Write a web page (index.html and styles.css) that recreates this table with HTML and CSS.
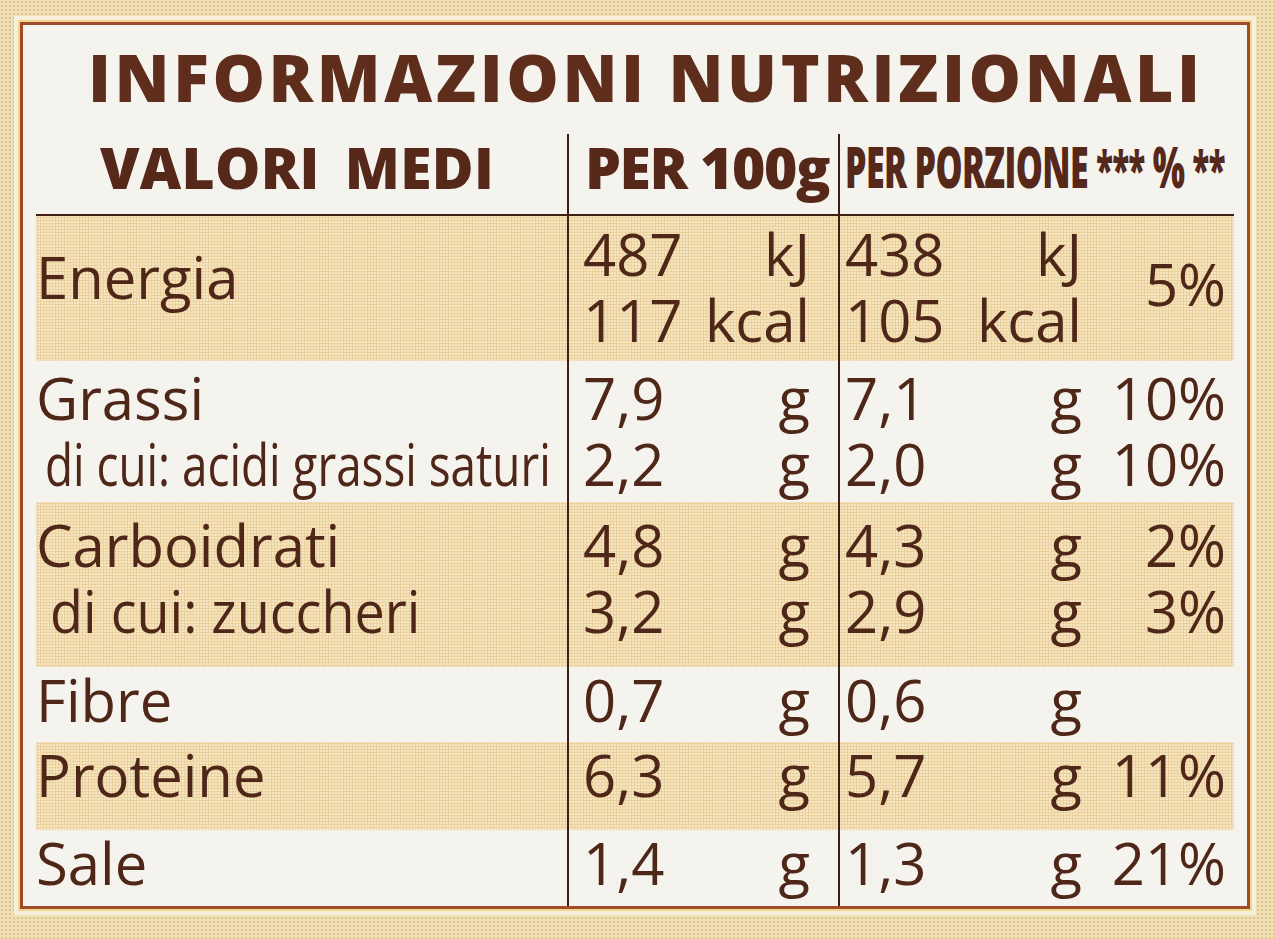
FILE: index.html
```html
<!DOCTYPE html>
<html lang="it">
<head>
<meta charset="utf-8">
<title>Informazioni nutrizionali</title>
<link rel="stylesheet" href="styles.css">
</head>
<body>
<div class="label">
  <h1 class="title">INFORMAZIONI NUTRIZIONALI</h1>
  <div class="table">
    <div class="row head">
      <div class="c1"><span class="valori">VALORI MEDI</span></div>
      <div class="c2"><span class="per100">PER 100g</span></div>
      <div class="c3"><span class="cond">PER PORZIONE <span class="ast">***</span> % <span class="ast">**</span></span></div>
    </div>

    <div class="row band r-energy">
      <div class="c1 energia">Energia</div>
      <div class="c2">
        <div class="line"><span>487</span><span>kJ</span></div>
        <div class="line"><span>117</span><span>kcal</span></div>
      </div>
      <div class="c3">
        <div class="vals">
          <div class="line"><span>438</span><span>kJ</span></div>
          <div class="line"><span>105</span><span>kcal</span></div>
        </div>
        <div class="pct pct-energy">5%</div>
      </div>
    </div>

    <div class="row r-grassi">
      <div class="c1">
        <div>Grassi</div>
        <div class="sub"><span class="squeeze s79">di cui: acidi grassi saturi</span></div>
      </div>
      <div class="c2">
        <div class="line"><span>7,9</span><span>g</span></div>
        <div class="line"><span>2,2</span><span>g</span></div>
      </div>
      <div class="c3">
        <div class="vals">
          <div class="line"><span>7,1</span><span>g</span></div>
          <div class="line"><span>2,0</span><span>g</span></div>
        </div>
        <div class="pct">
          <div>10%</div>
          <div>10%</div>
        </div>
      </div>
    </div>

    <div class="row band r-carbo">
      <div class="c1">
        <div>Carboidrati</div>
        <div class="sub2"><span class="squeeze s93">di cui: zuccheri</span></div>
      </div>
      <div class="c2">
        <div class="line"><span>4,8</span><span>g</span></div>
        <div class="line"><span>3,2</span><span>g</span></div>
      </div>
      <div class="c3">
        <div class="vals">
          <div class="line"><span>4,3</span><span>g</span></div>
          <div class="line"><span>2,9</span><span>g</span></div>
        </div>
        <div class="pct">
          <div>2%</div>
          <div>3%</div>
        </div>
      </div>
    </div>

    <div class="row r-fibre">
      <div class="c1">Fibre</div>
      <div class="c2"><div class="line"><span>0,7</span><span>g</span></div></div>
      <div class="c3">
        <div class="vals"><div class="line"><span>0,6</span><span>g</span></div></div>
        <div class="pct"></div>
      </div>
    </div>

    <div class="row band r-prot">
      <div class="c1">Proteine</div>
      <div class="c2"><div class="line"><span>6,3</span><span>g</span></div></div>
      <div class="c3">
        <div class="vals"><div class="line"><span>5,7</span><span>g</span></div></div>
        <div class="pct">11%</div>
      </div>
    </div>

    <div class="row r-sale">
      <div class="c1">Sale</div>
      <div class="c2"><div class="line"><span>1,4</span><span>g</span></div></div>
      <div class="c3">
        <div class="vals"><div class="line"><span>1,3</span><span>g</span></div></div>
        <div class="pct">21%</div>
      </div>
    </div>
  </div>
</div>
</body>
</html>
```

FILE: styles.css
```css
* {
  box-sizing: border-box;
  margin: 0;
  padding: 0;
}

html, body {
  width: 1275px;
  height: 939px;
  overflow: hidden;
}

body {
  background-color: #eedfb6;
  background-image:
    radial-gradient(circle, rgba(196, 142, 70, 0.35) 1px, transparent 1.4px);
  background-size: 4px 4px;
  font-family: "Open Sans", "Noto Sans", sans-serif;
  color: #4f2719;
  padding: 22px 0 0 20px;
}

.label {
  width: 1230px;
  height: 887px;
  border: 3px solid #a24a2c;
  background: #f5f3ee;
  box-shadow: 0 0 0 2px #f3d58c, 0 0 0 6px #f6efdc;
  padding: 0 13px;
}

.title {
  font-weight: 800;
  font-size: 66px;
  line-height: 66px;
  letter-spacing: 3.6px;
  margin-top: 18px;
  padding-left: 52px;
  white-space: nowrap;
  color: #5e2d1c;
}

.table {
  margin-top: 25px;
}

.row {
  display: grid;
  grid-template-columns: 531px 271px 396px;
  font-size: 58px;
  line-height: 66px;
  white-space: nowrap;
}

.c2,
.c3 {
  border-left: 2px solid #3e1f14;
}

.c2 {
  padding: 0 28px 0 14px;
}

.c3 {
  display: grid;
  grid-template-columns: 1fr 144px;
  padding: 0 8px 0 5px;
}

.line {
  display: flex;
  justify-content: space-between;
}

.pct {
  text-align: right;
}

.band {
  background-color: #f4e6c4;
  background-image:
    radial-gradient(circle, rgba(222, 180, 98, 0.5) 0.9px, transparent 1.3px);
  background-size: 3px 3px;
}

/* header */
.head {
  height: 82px;
  border-bottom: 2px solid #3e1f14;
  font-weight: 800;
  font-size: 57px;
  color: #55281a;
}

.head .c1 {
  padding-left: 64px;
}

.valori {
  letter-spacing: 0.3px;
  word-spacing: 10px;
}

.head .c2 {
  padding-left: 16px;
}

.per100 {
  letter-spacing: -1.4px;
}

.head .c3 {
  display: block;
  padding-left: 5px;
}

.cond {
  display: inline-block;
  font-size: 34px;
  line-height: 66px;
  letter-spacing: -0.6px;
  transform: scaleY(1.676);
  transform-origin: left center;
  vertical-align: top;
}

.ast {
  font-size: 31px;
}

/* rows */
.r-energy {
  height: 145px;
}

.r-energy > div {
  padding-top: 5px;
}

.r-energy > .energia {
  padding-top: 28px;
}

.r-energy .pct-energy {
  padding-top: 30px;
}

.r-grassi {
  height: 141px;
}

.r-grassi > div {
  padding-top: 4px;
}

.r-carbo {
  height: 165px;
}

.r-carbo > div {
  padding-top: 10px;
}

.r-fibre {
  height: 75px;
}

.r-prot {
  height: 88px;
}

.r-sale {
  height: 76px;
}

.sub {
  padding-left: 9px;
}

.sub2 {
  padding-left: 14px;
}

.squeeze {
  display: inline-block;
  transform-origin: left center;
}

.s79 {
  transform: scaleX(0.79);
}

.s93 {
  transform: scaleX(0.93);
}
```
